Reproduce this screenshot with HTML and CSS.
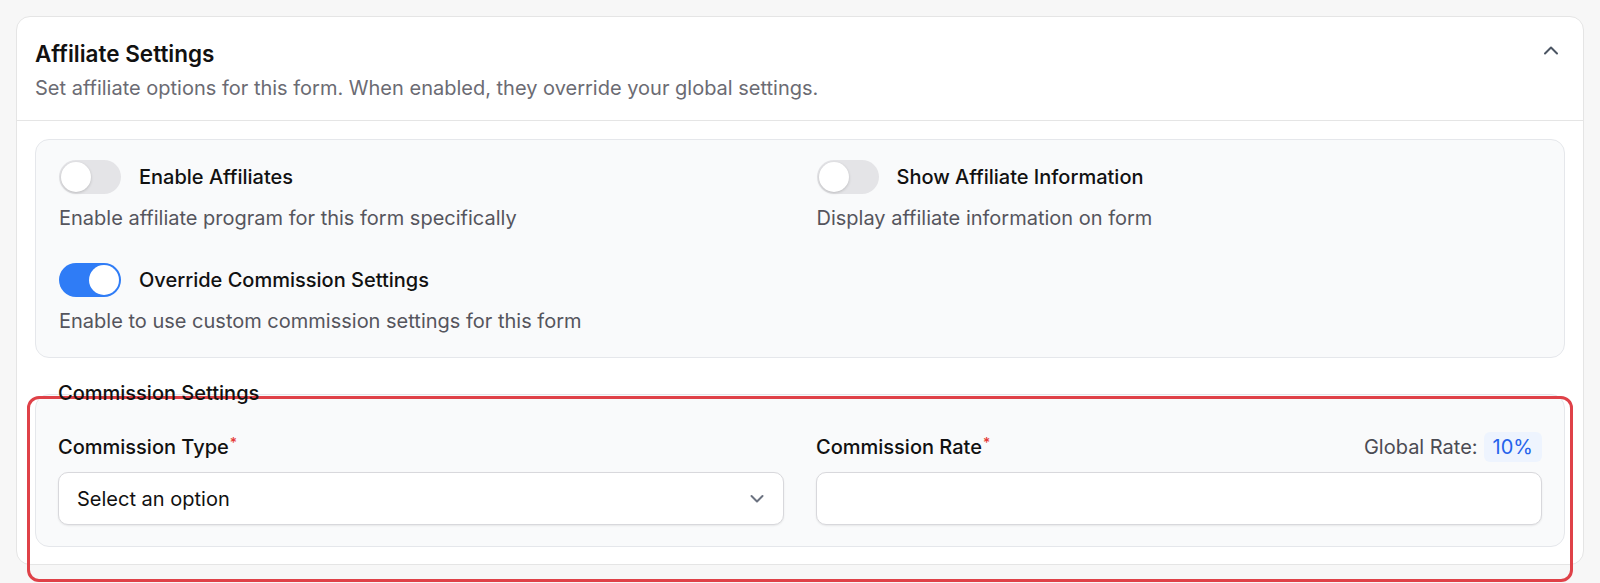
FILE: index.html
```html
<!DOCTYPE html>
<html lang="en">
<head>
<meta charset="utf-8">
<title>Affiliate Settings</title>
<link rel="stylesheet" href="styles.css">
</head>
<body>
<div class="page">
  <div class="card">
    <div class="card-head">
      <div class="head-text">
        <h2 class="title">Affiliate Settings</h2>
        <p class="subtitle">Set affiliate options for this form. When enabled, they override your global settings.</p>
      </div>
      <span class="collapse">
        <svg width="16" height="10" viewBox="0 0 16 10"><path d="M2 8.5 L8 2.5 L14 8.5" fill="none" stroke="#4b5563" stroke-width="2" stroke-linecap="round" stroke-linejoin="round"/></svg>
      </span>
    </div>
    <div class="card-body">
      <div class="panel toggles">
        <div class="field">
          <div class="toggle-row"><span class="switch"><span class="knob"></span></span><span class="toggle-label">Enable Affiliates</span></div>
          <p class="hint">Enable affiliate program for this form specifically</p>
        </div>
        <div class="field">
          <div class="toggle-row"><span class="switch"><span class="knob"></span></span><span class="toggle-label">Show Affiliate Information</span></div>
          <p class="hint">Display affiliate information on form</p>
        </div>
        <div class="field">
          <div class="toggle-row"><span class="switch on"><span class="knob"></span></span><span class="toggle-label">Override Commission Settings</span></div>
          <p class="hint">Enable to use custom commission settings for this form</p>
        </div>
      </div>
      <h3 class="section-title">Commission Settings</h3>
      <div class="panel commission">
        <div class="field">
          <div class="label-row"><span class="label">Commission Type<span class="req">*</span></span></div>
          <div class="select"><span>Select an option</span>
            <svg width="16" height="10" viewBox="0 0 16 10"><path d="M2.5 2 L8 7.5 L13.5 2" fill="none" stroke="#6b7280" stroke-width="2" stroke-linecap="round" stroke-linejoin="round"/></svg>
          </div>
        </div>
        <div class="field">
          <div class="label-row"><span class="label">Commission Rate<span class="req">*</span></span><span class="global">Global Rate: <span class="badge">10%</span></span></div>
          <div class="input"></div>
        </div>
      </div>
    </div>
  </div>
  <div class="highlight"></div>
</div>
</body>
</html>
```
FILE: styles.css
```css
* { box-sizing: border-box; }
html, body { margin: 0; padding: 0; }
body {
  background: #f7f7f7;
  font-family: Inter, "Noto Sans", sans-serif;
  color: #18181b;
}
.page {
  position: relative;
  height: 583px;
  padding: 16px 16px 0 16px;
  overflow: hidden;
}
.card {
  background: #ffffff;
  border: 1px solid #e5e5e5;
  border-radius: 14px;
}
.card-head {
  display: flex;
  justify-content: space-between;
  align-items: flex-start;
  padding: 22px 24px 18px 18px;
  border-bottom: 1px solid #e5e5e5;
}
.title {
  margin: 0;
  font-size: 22.5px;
  line-height: 30px;
  font-weight: 600;
  color: #111111;
}
.subtitle {
  margin: 5px 0 0 0;
  font-size: 20px;
  line-height: 28px;
  color: #6b6b73;
}
.collapse {
  display: flex;
  margin-top: 6px;
}
.card-body {
  padding: 18px 18px 17px 18px;
}
.panel {
  background: #f9fafb;
  border: 1px solid #e5e7eb;
  border-radius: 14px;
}
.toggles {
  display: grid;
  grid-template-columns: 1fr 1fr;
  column-gap: 32px;
  row-gap: 32px;
  padding: 20px 22px 23px 23px;
}
.toggle-row {
  display: flex;
  align-items: center;
  gap: 18px;
  height: 34px;
}
.switch {
  position: relative;
  width: 62px;
  height: 34px;
  border-radius: 17px;
  background: #e4e4e7;
  flex: none;
}
.switch .knob {
  position: absolute;
  top: 2px;
  left: 2px;
  width: 30px;
  height: 30px;
  border-radius: 50%;
  background: #ffffff;
  box-shadow: 0 1px 3px rgba(0,0,0,0.18);
}
.switch.on { background: #2f7cf6; }
.switch.on .knob { left: 30px; box-shadow: none; }
.toggle-label {
  font-size: 20px;
  font-weight: 500;
  line-height: 28px;
  color: #111111;
}
.hint {
  margin: 11px 0 0 0;
  font-size: 20px;
  line-height: 26px;
  color: #55555d;
}
.section-title {
  position: relative;
  z-index: 1;
  margin: 21px 0 -13px 23px;
  font-size: 20px;
  line-height: 28px;
  font-weight: 500;
  color: #111111;
}
.commission {
  display: grid;
  grid-template-columns: 1fr 1fr;
  column-gap: 32px;
  padding: 37px 22px 21px 22px;
}
.label-row {
  display: flex;
  justify-content: space-between;
  align-items: center;
  height: 30px;
  margin-bottom: 10px;
}
.label {
  font-size: 20px;
  font-weight: 500;
  line-height: 28px;
  color: #111111;
}
.req {
  color: #e53935;
  font-size: 14px;
  vertical-align: top;
  position: relative;
  top: -4px;
  margin-left: 1px;
}
.global {
  display: flex;
  align-items: center;
  gap: 6px;
  font-size: 20px;
  color: #4b4b53;
}
.badge {
  display: inline-flex;
  align-items: center;
  height: 30px;
  padding: 0 9px;
  border-radius: 6px;
  background: #eef4fe;
  color: #2563eb;
  font-size: 20px;
}
.select, .input {
  height: 53px;
  background: #ffffff;
  border: 1px solid #d8d8dc;
  border-radius: 10px;
  box-shadow: 0 1px 2px rgba(0,0,0,0.08);
}
.select {
  display: flex;
  align-items: center;
  justify-content: space-between;
  padding: 0 18px 0 18px;
  font-size: 20px;
  color: #111111;
}
.highlight {
  position: absolute;
  left: 27px;
  top: 396px;
  width: 1546px;
  height: 186px;
  border: 3px solid #df4148;
  border-radius: 12px;
  pointer-events: none;
}
```
